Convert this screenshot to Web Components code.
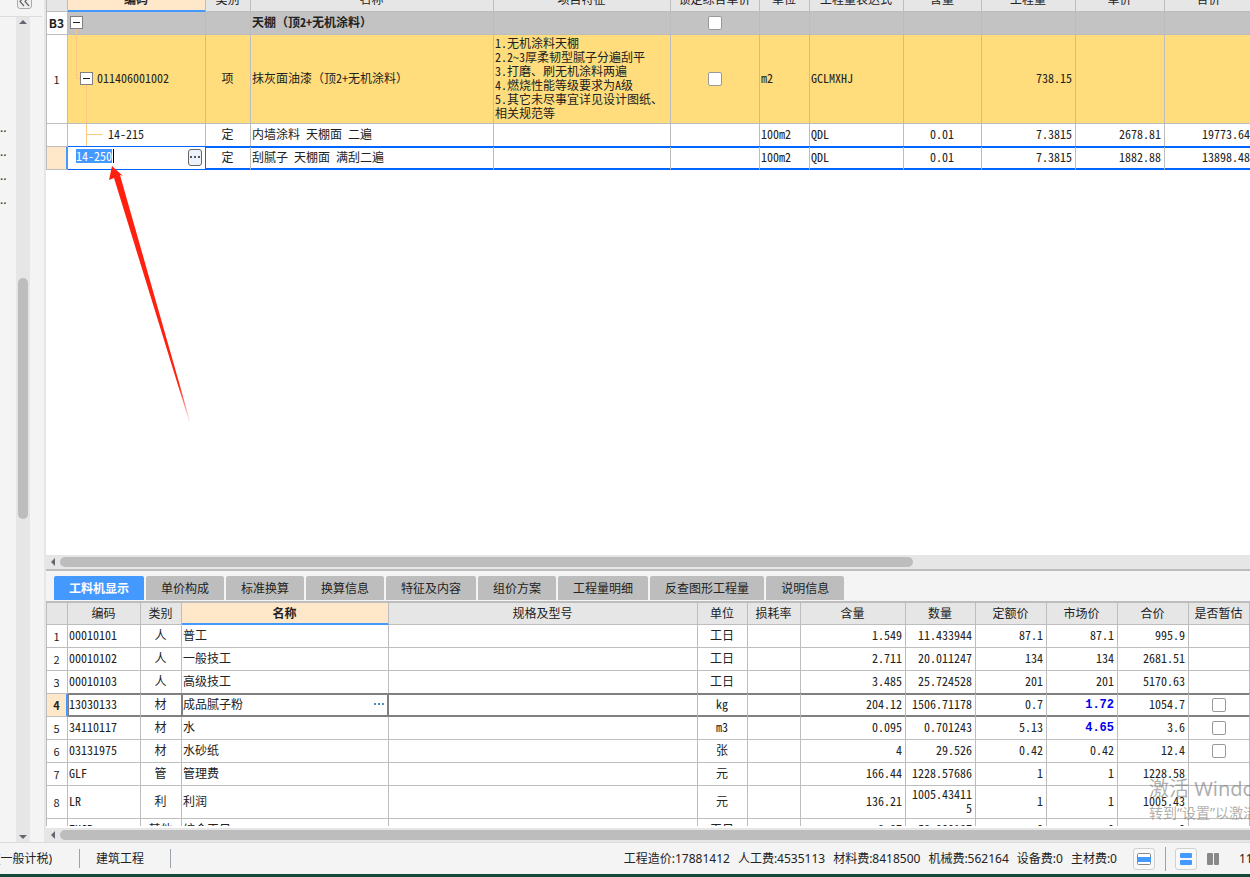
<!DOCTYPE html>
<html lang="zh-CN">
<head>
<meta charset="utf-8">
<title>工程计价</title>
<style>
  html, body { margin: 0; height: 100%; }
  body {
    --line: #bdbdbd; --face: #e6e6e6; --panel: #f4f4f4; --accent: #4499ff; --warm: #ffe7ca;
    font: 12px/14px "Noto Sans", "Noto Sans CJK SC", sans-serif;
    color: #222; overflow: hidden;
  }
</style>
</head>
<body>
<cost-app></cost-app>

<script>
const define = (name, html, setup) => customElements.define(name, class extends HTMLElement {
  connectedCallback() {
    if (this.shadowRoot) return;
    const template = document.createElement('template');
    template.innerHTML = html;
    this.attachShadow({ mode: 'open' }).append(template.content.cloneNode(true));
    if (setup) setup(this, this.shadowRoot);
  }
});

/* Horizontal scroll bar: arrow, track and thumb */
define('h-scroll', `
<style>
  :host { display: flex; align-items: center; gap: 4px; height: 14px; padding-left: 4px; background: var(--face); overflow: hidden; flex: none; }
  svg { flex: none; display: block; }
  .track { flex: 1; }
  .thumb { height: 10px; width: var(--thumb, 100%); border-radius: 5px; background: #bdbdbd; }
</style>
<svg width="6" height="8"><path d="M5 0v8L1 4z" fill="#666670"/></svg>
<div class="track"><div class="thumb"></div></div>`);

/* Collapsed project tree at the left with its scroll bar */
define('side-rail', `
<style>
  :host { display: flex; flex-direction: column; width: 46px; flex: none; background: var(--panel); border-right: 2px solid var(--face); box-sizing: border-box; overflow: hidden; }
  .top { height: 17px; margin-right: 2px; border-bottom: 1px solid #dcdcdc; overflow: hidden; flex: none; display: flex; align-items: flex-end; padding: 0 0 7px 17px; box-sizing: border-box; }
  .top button { width: 15px; height: 18px; flex: none; border: 1px solid #aaa; border-radius: 3px; background: #f0f0f0; padding: 0; display: grid; place-items: center; box-sizing: border-box; }
  svg { display: block; }
  .body { flex: 1; display: flex; }
  ul { list-style: none; margin: 0; padding: 99px 0 0; width: 16px; }
  li { height: 24px; line-height: 24px; }
  .bar { width: 14px; background: var(--face); display: flex; flex-direction: column; align-items: center; padding: 3px 0; }
  .thumb { flex: 240; width: 10px; border-radius: 5px; background: #bdbdbd; }
  .before { flex: 254; } .after { flex: 316; }
</style>
<div class="top"><button aria-label="收起"><svg width="11" height="16" fill="none" stroke="#666" stroke-width="1.200"><path d="M5 5L1 9.500l4 4.500M10 5L6 9.500l4 4.500"/></svg></button></div>
<div class="body">
  <ul><li>..</li><li>..</li><li>..</li><li>..</li></ul>
  <div class="bar">
    <svg width="8" height="4"><path d="M0 4h8L4 0z" fill="#666670"/></svg>
    <span class="before"></span><span class="thumb"></span><span class="after"></span>
    <svg width="8" height="4"><path d="M0 0h8L4 4z" fill="#666670"/></svg>
  </div>
</div>`);

define('tab-strip', `
<style>
  :host { display: flex; gap: 2px; padding: 5px 8px 1px; background: var(--panel); flex: none; }
  button { font: inherit; color: #222; border: 0; border-radius: 2px 2px 0 0; height: 24px; padding: 0 15px; background: #bdbdbd; white-space: nowrap; font-family: "Noto Sans CJK SC", sans-serif; }
  button.on { background: var(--accent); color: #fff; font-weight: bold; }
</style>`, (host, root) => {
  host.getAttribute('tabs').split(',').forEach((label, i) => {
    const b = document.createElement('button');
    b.textContent = label;
    if (!i) b.className = 'on';
    root.append(b);
  });
});

/* Shared look of both data grids */
const gridStyle = `
  :host { display: block; overflow: hidden; background: #fff; }
  table { table-layout: fixed; border-spacing: 0; min-width: 100%; font: 12px/14px "Noto Sans CJK SC", sans-serif; font-feature-settings: "hwid"; border-left: 1px solid var(--line); }
  th, td { box-sizing: border-box; height: 23px; padding: 0 2px 2px 1px; border-right: 1px solid var(--line); border-bottom: 1px solid var(--line); font-weight: normal; text-align: left; word-break: break-all; position: relative; }
  td:has(> input) { padding: 0 1px; }
  thead th { background: var(--face); text-align: center; white-space: nowrap; height: 24px; }
  thead th.on { background: var(--warm); font-weight: bold; border-bottom-color: var(--accent); box-shadow: inset 0 -1px 0 var(--accent); }
  tbody th { text-align: center; padding: 0 1px 0 0; font-feature-settings: normal; font-size: 11px; }
  td.c { text-align: center; }
  td.r { text-align: right; padding: 0 3px 2px; }
  input[type=checkbox] { appearance: none; display: block; margin: 0 auto; width: 14px; height: 14px; border: 1px solid #999; border-radius: 2px; background: #fff; box-sizing: border-box; }
  .full { font-feature-settings: normal; }
  .dots { border: 0; background: none; padding: 0; display: flex; align-items: center; justify-content: center; flex: none; }
`;
const check = '<input type="checkbox" aria-label="选择">';
const fillGrid = (root, cols, rows) => {
  const table = root.querySelector('table');
  table.innerHTML = '<colgroup>' + cols.map(c => `<col${c[1] ? ` style="width:${c[1]}px"` : ''}>`).join('') + '</colgroup>'
    + '<thead><tr>' + cols.map(c => `<th class="${c[3] || ''}">${c[0]}</th>`).join('') + '</tr></thead><tbody>'
    + rows.map(r => `<tr class="${r.kind || ''}">` + r.cells.map((v, i) =>
        i ? `<td class="${cols[i][2] || ''}">${v}</td>` : `<th scope="row">${v}</th>`).join('') + '</tr>').join('')
    + '</tbody>';
};

/* Bill of quantities */
define('bill-grid', `
<style>${gridStyle}
  table { width: 1208px; margin-top: -12px; }
  tr.group td { background: #c3c3c3; font-weight: bold; }
  tr.group th { font-weight: bold; font-size: 12px; }
  tr.item td { background: #ffdd7d; height: 89px; }
  tr.sel td { --edge: #0066ff; box-shadow: 0 -1px 0 var(--edge), inset 0 1px 0 var(--edge), inset 0 -1px 0 var(--edge); border-bottom-color: var(--edge); }
  tr.sel th { background: var(--warm); border-right-color: var(--accent); box-shadow: inset -1px 0 0 var(--accent); }
  tr.sel td:nth-child(2) { box-shadow: 0 -1px 0 var(--edge); border-right-color: var(--edge); }
  .lines { position: absolute; left: 0; top: 0; width: 100%; height: 100%; fill: none; stroke: #ffc880; }
  .node { display: flex; align-items: center; gap: 4px; position: relative; padding-left: 1px; }
  .l2 { padding-left: 11px; } .l3 { padding-left: 39px; }
  .node button { width: 13px; height: 13px; border: 1px solid #808080; background: #fff; padding: 2px; flex: none; display: grid; place-items: center; }
  .node button i { width: 7px; height: 1px; background: #222; }
  .edit { display: flex; justify-content: space-between; padding: 0 1px 0 7px; }
  .edit input { border: 0; border-right: 1px solid #000; padding: 0; margin: 0; width: 37px; height: 14px; font: inherit; font-feature-settings: inherit; outline: 0; color: #222; background: #fff; }
  .edit input::selection { background: #4499ff; color: #fff; }
  .edit .dots { width: 14px; height: 17px; border: 1px solid #666; border-radius: 3px; background: #edf2fa; }
</style>
<table></table>`, (host, root) => {
  const box = '<button aria-label="折叠"><i></i></button>';
  const full = s => `<span class="full">${s}</span>`;
  fillGrid(root, [
    ['', 21], ['编码', 138, '', 'on'], ['类别', 45, 'c'], ['名称', 243], ['项目特征', 177], ['锁定综合单价', 89, 'c'],
    ['单位', 50], ['工程量表达式', 94], ['含量', 78, 'c'], ['工程量', 94, 'r'], ['单价', 89, 'r'], ['合价', 89, 'r']
  ], [
    { kind: 'group', cells: ['B3', `<svg class="lines"><path d="M8.500 17v6"/></svg><div class="node">${box}</div>`, '', `天棚${full('（')}顶2+无机涂料${full('）')}`, '', check, '', '', '', '', '', ''] },
    { kind: 'item', cells: ['1', `<svg class="lines"><path d="M8.500 0v43.500h4M18.500 50v39"/></svg><div class="node l2">${box}<span>011406001002</span></div>`, '项', `抹灰面油漆${full('（')}顶2+无机涂料${full('）')}`,
      '1.无机涂料天棚<br>2.2~3厚柔韧型腻子分遍刮平<br>3.打磨、刷无机涂料两遍<br>4.燃烧性能等级要求为A级<br>5.其它未尽事宜详见设计图纸、相关规范等', check, 'm2', 'GCLMXHJ', '', '738.15', '', ''] },
    { cells: ['', '<svg class="lines"><path d="M18.500 0v23M18.500 10.500h16"/></svg><div class="node l3">14-215</div>', '定', '内墙涂料 天棚面 二遍', '', '', '100m2', 'QDL', '0.01', '7.3815', '2678.81', '19773.64'] },
    { kind: 'sel', cells: ['', '<div class="edit"><input type="text" aria-label="编码" value="14-250"><button class="dots" aria-label="更多"><svg width="10" height="2" fill="#555"><path d="M0 0h2v2H0zM4 0h2v2H4zM8 0h2v2H8z"/></svg></button></div>', '定', '刮腻子 天棚面 满刮二遍', '', '', '100m2', 'QDL', '0.01', '7.3815', '1882.88', '13898.48'] }
  ]);
  const input = root.querySelector('.edit input');
  input.focus({ preventScroll: true });
  input.select();
});

/* Labour, material and machine breakdown */
define('resource-grid', `
<style>${gridStyle}
  :host { height: 225px; flex: none; }
  table { width: 100%; }
  thead th { border-top: 2px solid var(--line); }
  tr.tall td { height: 33px; }
  tr.sel td { --edge: #808080; box-shadow: inset 0 1px 0 var(--edge), 0 -1px 0 var(--edge), inset 0 -1px 0 var(--edge); border-bottom-color: var(--edge); }
  tr.sel td:nth-child(2) { box-shadow: inset 1px 1px 0 var(--edge), 0 -1px 0 var(--edge), inset 0 -1px 0 var(--edge); }
  tr.sel td:nth-child(4) { box-shadow: inset 1px 1px 0 var(--edge), 0 -1px 0 var(--edge), inset -1px -1px 0 var(--edge); border-right-color: var(--edge); }
  tr.sel td:nth-child(3) { border-right-color: var(--edge); }
  tr.sel th { font-weight: bold; background: var(--warm); border-right-color: var(--accent); box-shadow: inset -1px 0 0 var(--accent); }
  b { color: #00e; font-family: "Liberation Mono", monospace; }
  .pick { display: flex; justify-content: space-between; align-items: center; padding-right: 2px; }
</style>
<table></table>`, (host, root) => fillGrid(root, [
  ['', 21], ['编码', 73], ['类别', 41, 'c'], ['名称', 207, '', 'on'], ['规格及型号', 309], ['单位', 50, 'c'], ['损耗率', 53, 'r'],
  ['含量', 105, 'r'], ['数量', 70, 'r'], ['定额价', 71, 'r'], ['市场价', 71, 'r'], ['合价', 71, 'r'], ['是否暂估', 0, 'c']
], [
  { cells: ['1', '00010101', '人', '普工', '', '工日', '', '1.549', '11.433944', '87.1', '87.1', '995.9', ''] },
  { cells: ['2', '00010102', '人', '一般技工', '', '工日', '', '2.711', '20.011247', '134', '134', '2681.51', ''] },
  { cells: ['3', '00010103', '人', '高级技工', '', '工日', '', '3.485', '25.724528', '201', '201', '5170.63', ''] },
  { kind: 'sel', cells: ['4', '13030133', '材', '<div class="pick">成品腻子粉<button class="dots" aria-label="更多"><svg width="10" height="2" fill="#4a90c8"><path d="M0 0h2v2H0zM4 0h2v2H4zM8 0h2v2H8z"/></svg></button></div>', '', 'kg', '', '204.12', '1506.71178', '0.7', '<b>1.72</b>', '1054.7', check] },
  { cells: ['5', '34110117', '材', '水', '', 'm3', '', '0.095', '0.701243', '5.13', '<b>4.65</b>', '3.6', check] },
  { cells: ['6', '03131975', '材', '水砂纸', '', '张', '', '4', '29.526', '0.42', '0.42', '12.4', check] },
  { cells: ['7', 'GLF', '管', '管理费', '', '元', '', '166.44', '1228.57686', '1', '1', '1228.58', ''] },
  { kind: 'tall', cells: ['8', 'LR', '利', '利润', '', '元', '', '136.21', '1005.434115', '1', '1', '1005.43', ''] },
  { cells: ['9', 'ZHGR', '其他', '综合工日', '', '工日', '', '8.87', '58.900187', '0', '0', '0', ''] }
]));

define('status-bar', `
<style>
  :host { display: flex; align-items: center; height: 35px; flex: none; background: var(--panel); border-top: 1px solid #dcdcdc; border-bottom: 3px solid #14493a; white-space: nowrap; overflow: hidden; box-sizing: border-box; }
  .tax { margin-left: -3px; width: 82px; }
  .sep { width: 1px; height: 19px; background: #9aa3ad; flex: none; }
  .kind { padding: 0 26px 0 16px; }
  .sums { margin-left: auto; display: flex; gap: 8px; }
  button { box-sizing: border-box; width: 22px; height: 22px; padding: 0; border: 1px solid #d0d0d0; border-radius: 3px; background: #f8f8f8; display: grid; place-items: center; flex: none; }
  button.flat { border-color: transparent; background: none; }
  .tools { display: flex; align-items: center; margin-left: 16px; }
  .tools .sep { margin: 0 9px 0 10px; height: 24px; }
  .tools .flat { margin-left: 5px; }
  .zoom { width: 11px; margin-left: 15px; overflow: hidden; }
</style>
<span class="tax">(一般计税)</span><i class="sep"></i><span class="kind">建筑工程</span><i class="sep"></i>
<div class="sums"><span>工程造价:17881412</span><span>人工费:4535113</span><span>材料费:8418500</span><span>机械费:562164</span><span>设备费:0</span><span>主材费:0</span></div>
<div class="tools">
  <button aria-label="单栏"><svg width="14" height="12"><rect x=".5" y=".5" width="13" height="11" rx="1" fill="#fff" stroke="#888"/><path d="M0 4h14v5H0z" fill="#4499ff"/></svg></button>
  <i class="sep"></i>
  <button aria-label="上下分栏"><svg width="12" height="12" fill="#4499ff"><rect width="12" height="5" rx="1"/><rect y="7" width="12" height="5" rx="1"/></svg></button>
  <button class="flat" aria-label="左右分栏"><svg width="12" height="12" fill="#888"><rect width="6" height="12" rx="1"/><rect x="7" width="5" height="12" rx="1"/></svg></button>
  <span class="zoom">11</span>
</div>`);

/* Hand drawn pointer over the bill grid */
define('note-arrow', `
<style>:host { position: absolute; left: 108px; top: 166px; pointer-events: none; } svg { display: block; }</style>
<svg width="84" height="258">
  <defs><linearGradient id="fade" x1="0" y1="0" x2="0" y2="1"><stop offset=".86" stop-color="#ff2010"/><stop offset="1" stop-color="#ff2010" stop-opacity=".1"/></linearGradient></defs>
  <path d="M4 0L1 14L6 12L81 255L82 255L12 9L15 10Z" fill="url(#fade)"/>
</svg>`);

define('activation-mark', `
<style>
  :host { position: absolute; left: calc(100% - 101px); right: 0; bottom: 53px; overflow: hidden; white-space: nowrap; color: rgba(120,120,120,.6); pointer-events: none; }
  .big { font-size: 20px; line-height: 26px; } .small { font-size: 14px; line-height: 22px; font-family: "Noto Sans", "Noto Sans CJK SC", sans-serif; }
</style>
<div class="big">激活 Windows</div><div class="small">转到“设置”以激活 Windows。</div>`);

define('cost-app', `
<style>
  :host { display: flex; flex-direction: column; height: 100vh; position: relative; overflow: hidden; }
  .work { flex: 1; display: flex; min-height: 0; }
  main { flex: 1; min-width: 0; display: flex; flex-direction: column; background: #fff; }
  bill-grid { flex: 1; min-height: 0; }
  .upper { --thumb: calc(100% - 337px); border-bottom: 2px solid var(--line); }
  .lower { --thumb: calc(100% + 20px); margin-top: 2px; }
</style>
<div class="work">
  <side-rail></side-rail>
  <main>
    <bill-grid></bill-grid>
    <h-scroll class="upper"></h-scroll>
    <tab-strip tabs="工料机显示,单价构成,标准换算,换算信息,特征及内容,组价方案,工程量明细,反查图形工程量,说明信息"></tab-strip>
    <resource-grid></resource-grid>
    <h-scroll class="lower"></h-scroll>
  </main>
</div>
<status-bar></status-bar>
<note-arrow></note-arrow>
<activation-mark></activation-mark>`);
</script>
</body>
</html>
